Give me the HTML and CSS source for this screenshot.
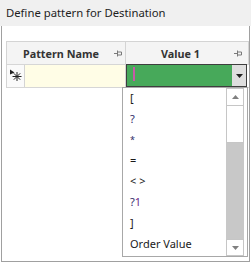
FILE: index.html
```html
<!DOCTYPE html>
<html lang="en">
<head>
  <meta charset="UTF-8">
  <title>Define pattern</title>
  <link rel="stylesheet" href="styles.css">
</head>
<body>
  <div class="dialog">
    <div class="title">Define pattern for Destination</div>
    <div class="panel">
      <div class="grid">
        <div class="row head">
          <div class="cell corner"></div>
          <div class="cell name">
            <span>Pattern Name</span>
            <svg class="pin" width="8" height="7" viewBox="0 0 8 7"><path d="M0 3.5H3.5M3.5 0.5V6.5M3.5 2H7.5V5H3.5" fill="none" stroke="#7a7a7a" stroke-width="1"/></svg>
          </div>
          <div class="cell value">
            <span>Value 1</span>
            <svg class="pin" width="8" height="7" viewBox="0 0 8 7"><path d="M0 3.5H3.5M3.5 0.5V6.5M3.5 2H7.5V5H3.5" fill="none" stroke="#7a7a7a" stroke-width="1"/></svg>
          </div>
        </div>
        <div class="row new">
          <div class="cell indicator">
            <svg width="14" height="14" viewBox="0 0 14 14">
              <path d="M1 0.5L5.5 3.5L1 5.5Z" fill="#222"/>
              <path d="M8 3V12M3.5 7.5H12.5M4.8 4.3L11.2 10.7M11.2 4.3L4.8 10.7" stroke="#222" stroke-width="1"/>
            </svg>
          </div>
          <div class="cell name edit"></div>
          <div class="cell value">
            <div class="combo">
              <div class="field"><span class="caret"></span></div>
              <div class="drop-btn">
                <svg width="7" height="4" viewBox="0 0 7 4"><path d="M0 0H7L3.5 4Z" fill="#222"/></svg>
              </div>
            </div>
          </div>
        </div>
      </div>

      <div class="dropdown">
        <ul class="items">
          <li>[</li>
          <li class="wild">?</li>
          <li class="wild star">*</li>
          <li>=</li>
          <li>&lt; &gt;</li>
          <li><span class="wild">?</span><span class="num">1</span></li>
          <li>]</li>
          <li>Order Value</li>
        </ul>
        <div class="scrollbar">
          <div class="sb-btn">
            <svg width="7" height="4" viewBox="0 0 7 4"><path d="M0 4H7L3.5 0Z" fill="#808080"/></svg>
          </div>
          <div class="sb-thumb"></div>
          <div class="sb-track"></div>
          <div class="sb-btn down">
            <svg width="7" height="4" viewBox="0 0 7 4"><path d="M0 0H7L3.5 4Z" fill="#808080"/></svg>
          </div>
        </div>
      </div>
    </div>
  </div>
</body>
</html>
```

FILE: styles.css
```css
body {
  margin: 0;
  padding: 0;
  background: #fff;
  font-family: 'Noto Sans', 'Open Sans', Arial, sans-serif;
  font-size: 11px;
  color: #222;
}
.dialog {
  width: 251px;
  height: 263px;
  display: flex;
  flex-direction: column;
}
.title {
  height: 26px;
  line-height: 25px;
  padding-left: 6px;
  background: #f0f0f0;
  font-size: 11.3px;
  color: #1e1e1e;
}
.panel {
  position: relative;
  flex: 1;
  margin: 0 1px 1px 1px;
  border: 1px solid #a0a0a0;
  border-top: none;
  padding: 15px 0 0 4px;
}
.grid {
  border-left: 1px solid #d4d4d4;
}
.row {
  display: flex;
  height: 22px;
  border-bottom: 1px solid #d6d6d6;
}
.row.head {
  border-top: 1px solid #d4d4d4;
  background: #f4f4f4;
}
.cell {
  display: flex;
  align-items: center;
  box-sizing: border-box;
}
.head .cell {
  font-weight: bold;
  font-size: 10.8px;
  color: #333;
}
.corner {
  width: 16px;
}
.head .name {
  width: 103px;
  border-right: 1px solid #d4d4d4;
  padding-right: 3px;
}
.head .value {
  flex: 1;
  padding-left: 35px;
  padding-right: 6px;
  border-right: 1px solid #d4d4d4;
}
.pin {
  margin-left: auto;
}
.indicator {
  width: 18px;
  border-right: 1px solid #d4d4d4;
  background: #fafafa;
  padding-left: 2px;
}
.new .name {
  width: 101px;
  border-right: 1px solid #d4d4d4;
}
.edit {
  background: #fffde6;
}
.new .value {
  flex: 1;
  align-items: stretch;
  padding-right: 2px;
}
.combo {
  flex: 1;
  display: flex;
  border: 1px solid #3e3e3e;
  margin-top: -1px;
}
.field {
  flex: 1;
  background: #47a95a;
  padding: 2px 0 0 6px;
}
.caret {
  display: block;
  width: 2px;
  height: 14px;
  background: #c65aa8;
}
.drop-btn {
  width: 14px;
  background: #dedede;
  display: flex;
  align-items: center;
  justify-content: center;
}
.dropdown {
  position: absolute;
  left: 120px;
  top: 61px;
  width: 126px;
  height: 170px;
  box-sizing: border-box;
  border: 1px solid #a8a8a8;
  background: #fff;
  display: flex;
}
.items {
  flex: 1;
  list-style: none;
  margin: 0;
  padding: 0;
}
.items li {
  height: 20.8px;
  line-height: 20.8px;
  padding-left: 7px;
  color: #1a1a1a;
}
.items .wild {
  color: #2e2a66;
}
.items .star {
  font-size: 9px;
}
.items .num {
  color: #6e2a86;
}
.scrollbar {
  width: 18px;
  margin-right: 3px;
  display: flex;
  flex-direction: column;
}
.sb-btn {
  height: 18px;
  box-sizing: border-box;
  border: 1px solid #c6c6c6;
  background: #fff;
  display: flex;
  align-items: center;
  justify-content: center;
}
.sb-btn.down {
  height: 17px;
}
.sb-thumb {
  height: 37px;
  box-sizing: border-box;
  border: 1px solid #c6c6c6;
  border-top: none;
  background: #fff;
}
.sb-track {
  flex: 1;
  background: #c8c8c8;
}
```
